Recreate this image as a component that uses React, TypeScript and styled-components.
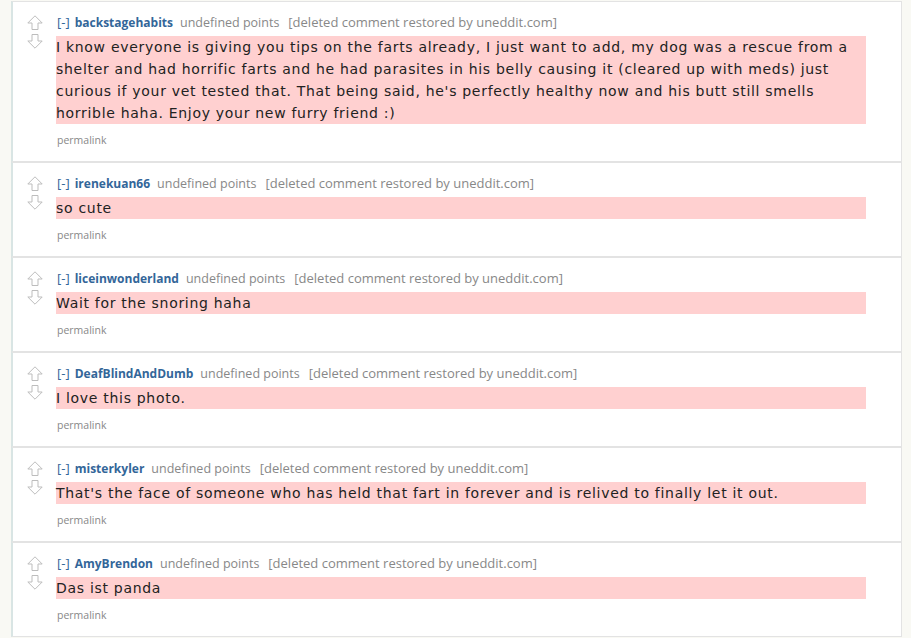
import React from "react";
import styled, { createGlobalStyle } from "styled-components";

const GlobalStyle = createGlobalStyle`
  html, body {
    margin: 0;
    padding: 0;
    background: #f9f9f4;
  }
  #root {
    min-height: 638px;
  }
`;

const Page = styled.div`
  padding: 1px 9px 1px 11px;
`;

const CommentList = styled.div`
  display: flex;
  flex-direction: column;
`;

const Comment = styled.div`
  display: flex;
  background: #ffffff;
  border: 1px solid #e3e3e3;
  border-left: 2px solid #d9e5e4;
  padding: 11px 0 15px 0;
`;

const VoteCol = styled.div`
  display: flex;
  flex-direction: column;
  align-items: center;
  width: 16px;
  margin: 2px 13px 0 14px;
  gap: 4px;
`;

const Arrow = styled.svg`
  display: block;
  width: 16px;
  height: 15px;
`;

const Entry = styled.div`
  display: flex;
  flex-direction: column;
  flex: 1;
  min-width: 0;
`;

const Tagline = styled.div`
  font-family: "Open Sans", "Noto Sans", sans-serif;
  font-size: 13px;
  line-height: 18px;
  height: 18px;
  color: #888888;
  white-space: nowrap;
  padding-left: 1px;
`;

const Expand = styled.span`
  color: #336699;
  margin-right: 5px;
`;

const Author = styled.span`
  color: #336699;
  font-weight: bold;
  font-size: 12px;
  margin-right: 7px;
`;

const Score = styled.span`
  font-size: 12.5px;
  margin-right: 9px;
`;

const Body = styled.div`
  margin-top: 5px;
  max-width: 810px;
  background: #ffd0d0;
  font-family: "DejaVu Sans", Verdana, sans-serif;
  font-size: 14px;
  letter-spacing: 0.7px;
  line-height: 22px;
  color: #222222;
`;

const Buttons = styled.ul`
  list-style: none;
  margin: 6px 0 0 0;
  padding: 0;
  display: flex;
  height: 16px;
`;

const ButtonLink = styled.a`
  font-family: "Open Sans", "Noto Sans", sans-serif;
  font-size: 10.5px;
  line-height: 16px;
  color: #888888;
  text-decoration: none;
  padding: 0 1px;
`;

const UpArrow = () => (
  <Arrow viewBox="0 0 16 15">
    <path
      d="M8 0.8 L15.2 8 H11 V14.5 H5 V8 H0.8 Z"
      fill="#ffffff"
      stroke="#bdbdbd"
      strokeWidth="1"
    />
  </Arrow>
);

const DownArrow = () => (
  <Arrow viewBox="0 0 16 15">
    <path
      d="M8 14.2 L15.2 7 H11 V0.5 H5 V7 H0.8 Z"
      fill="#ffffff"
      stroke="#bdbdbd"
      strokeWidth="1"
    />
  </Arrow>
);

const comments = [
  {
    author: "backstagehabits",
    body:
      "I know everyone is giving you tips on the farts already, I just want to add, my dog was a rescue from a shelter and had horrific farts and he had parasites in his belly causing it (cleared up with meds) just curious if your vet tested that. That being said, he's perfectly healthy now and his butt still smells horrible haha. Enjoy your new furry friend :)",
  },
  { author: "irenekuan66", body: "so cute" },
  { author: "liceinwonderland", body: "Wait for the snoring haha" },
  { author: "DeafBlindAndDumb", body: "I love this photo." },
  {
    author: "misterkyler",
    body:
      "That's the face of someone who has held that fart in forever and is relived to finally let it out.",
  },
  { author: "AmyBrendon", body: "Das ist panda" },
];

export default function App() {
  return (
    <>
      <GlobalStyle />
      <Page>
        <CommentList>
          {comments.map((c) => (
            <Comment key={c.author}>
              <VoteCol>
                <UpArrow />
                <DownArrow />
              </VoteCol>
              <Entry>
                <Tagline>
                  <Expand>[-]</Expand>
                  <Author>{c.author}</Author>
                  <Score>undefined points</Score>
                  <span>[deleted comment restored by uneddit.com]</span>
                </Tagline>
                <Body>{c.body}</Body>
                <Buttons>
                  <li>
                    <ButtonLink href="#">permalink</ButtonLink>
                  </li>
                </Buttons>
              </Entry>
            </Comment>
          ))}
        </CommentList>
      </Page>
    </>
  );
}
